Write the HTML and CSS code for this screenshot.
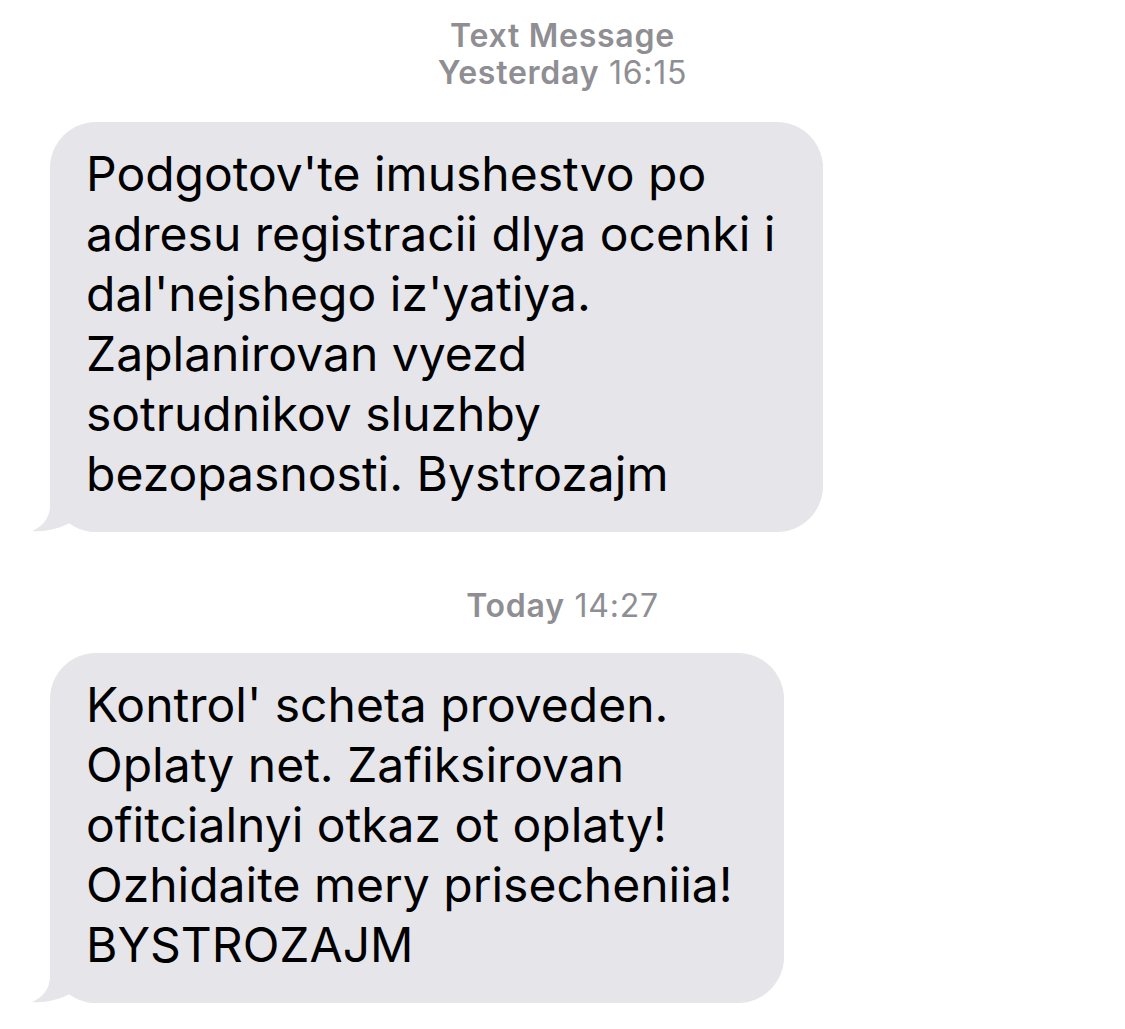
FILE: index.html
```html
<!DOCTYPE html>
<html lang="en">
<head>
    <meta charset="UTF-8">
    <meta name="viewport" content="width=device-width, initial-scale=1.0">
    <title>Messages</title>
    <link rel="stylesheet" href="styles.css">
</head>
<body>
    <!-- Conversation header -->
    <div class="stamp stamp-top">
        <b>Text Message</b><br>
        <b>Yesterday</b> 16:15
    </div>

    <!-- First message -->
    <div class="bubble bubble-wide">
        <svg class="tail" width="80" height="50" viewBox="0 0 80 50">
            <path d="M18 4 L18 24 C18 36 10 45 0 49 C12 50 26 47 38 41 C48 47 58 50 64 50 Z" fill="#e5e5ea"/>
        </svg>
        Podgotov'te imushestvo po<br>
        adresu registracii dlya ocenki i<br>
        dal'nejshego iz'yatiya.<br>
        Zaplanirovan vyezd<br>
        sotrudnikov sluzhby<br>
        bezopasnosti. Bystrozajm
    </div>

    <div class="stamp stamp-mid">
        <b>Today</b> 14:27
    </div>

    <!-- Second message -->
    <div class="bubble bubble-narrow">
        <svg class="tail" width="80" height="50" viewBox="0 0 80 50">
            <path d="M18 4 L18 24 C18 36 10 45 0 49 C12 50 26 47 38 41 C48 47 58 50 64 50 Z" fill="#e5e5ea"/>
        </svg>
        Kontrol' scheta proveden.<br>
        Oplaty net. Zafiksirovan<br>
        ofitcialnyi otkaz ot oplaty!<br>
        Ozhidaite mery prisecheniia!<br>
        BYSTROZAJM
    </div>
</body>
</html>
```

FILE: styles.css
```css
body {
    margin: 0;
    background-color: #fff;
    font-family: Inter, "Noto Sans", sans-serif;
    color: #000;
}
.stamp {
    text-align: center;
    color: #8e8e93;
    font-size: 32px;
    line-height: 37px;
    letter-spacing: 0.75px;
    font-weight: 400;
}
.stamp b {
    font-weight: 600;
}
.stamp-top {
    margin-top: 17px;
}
.stamp-mid {
    margin-top: 55px;
}
.bubble {
    position: relative;
    box-sizing: border-box;
    margin-left: 50px;
    padding: 22px 0 28px 36px;
    background-color: #e5e5ea;
    border-radius: 46px;
    font-size: 48px;
    line-height: 60px;
    white-space: nowrap;
}
.bubble-wide {
    width: 773px;
    margin-top: 31px;
}
.bubble-narrow {
    width: 734px;
    margin-top: 29px;
}
.tail {
    position: absolute;
    left: -18px;
    bottom: 0;
    display: block;
}
```
